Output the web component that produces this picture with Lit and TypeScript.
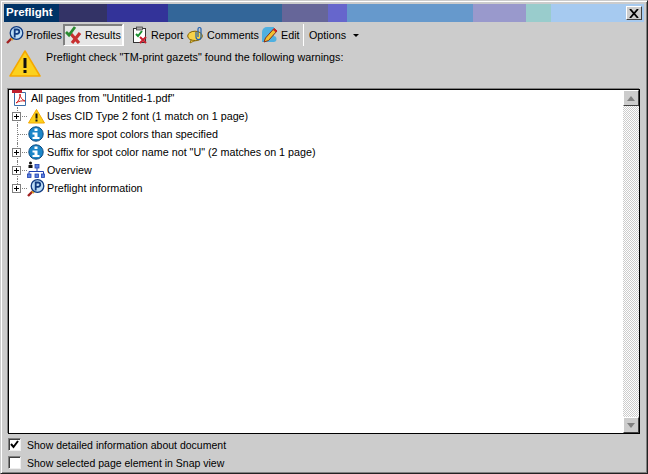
import { LitElement, html, css, svg } from "lit";
import { customElement } from "lit/decorators.js";

const segs: [number, string][] = [
  [55, "#003366"], [48, "#333366"], [61, "#333399"], [114, "#336699"], [46, "#666699"],
  [19, "#6666cc"], [126, "#6699cc"], [53, "#9999cc"], [25, "#99cccc"], [93, "#a6caf0"],
];

const pIcon = svg`<svg width="18" height="18" viewBox="0 0 18 18"><path d="M1 17l5-5" stroke="#a02020" stroke-width="2.400"/><path d="M5 12l2 2" stroke="#e0a020" stroke-width="2"/><circle cx="10.500" cy="7" r="6.300" fill="#bcdcf5" stroke="#103a80" stroke-width="1.300"/><path d="M8.700 11.500V3.500h2.400a2.100 2.100 0 0 1 0 4.300H8.700" fill="none" stroke="#103a80" stroke-width="1.800"/></svg>`;
const checkX = svg`<svg width="18" height="18" viewBox="0 0 18 18"><path d="M6 8l8 9M15 7l-8 10" stroke="#c83030" stroke-width="3.200"/><path d="M1 6l3 3 6-8" fill="none" stroke="#2a8a30" stroke-width="2.800"/></svg>`;
const report = svg`<svg width="18" height="18" viewBox="0 0 18 18"><rect x="2.500" y="2.500" width="12" height="14" fill="#fff" stroke="#333"/><rect x="5.500" y="1" width="6" height="3" fill="#aaa" stroke="#333" stroke-width=".7"/><path d="M5 8l2 2 4-5" fill="none" stroke="#1a9030" stroke-width="2"/><path d="M9 11l6 6M15 11l-6 6" stroke="#c82030" stroke-width="2"/></svg>`;
const comment = svg`<svg width="18" height="18" viewBox="0 0 18 18"><ellipse cx="8" cy="10" rx="7.300" ry="4.800" fill="#f7d34a" stroke="#806000"/><path d="M4 14l-1 3 5-2.500z" fill="#f7d34a" stroke="#806000" stroke-width=".8"/><path d="M11 11V3a1.500 1.500 0 0 1 3 0v8a2.500 2.500 0 0 1-5 0V6" fill="none" stroke="#2060b0" stroke-width="1.200"/></svg>`;
const edit = svg`<svg width="18" height="18" viewBox="0 0 18 18"><path d="M1 16V6a5 5 0 0 1 5-5h7v15z" fill="#4fb0e0"/><circle cx="12.500" cy="13" r="3" fill="#4fb0e0"/><path d="M3 16l1.500-4L13 2.500l3 2.500-8.500 9.500z" fill="#f0c030" stroke="#802010" stroke-width=".9"/><path d="M12.500 3l3 2.500" stroke="#d02020" stroke-width="2.200"/></svg>`;
const warnBig = svg`<svg width="32" height="28" viewBox="0 0 32 28"><path d="M16 1L31 26H1z" fill="#fbd11e" stroke="#f5a800" stroke-width="1.500" stroke-linejoin="round"/><path d="M16 8v10" stroke="#111" stroke-width="3"/><rect x="14.500" y="20" width="3" height="3" fill="#111"/></svg>`;
const warnSm = svg`<svg width="17" height="15" viewBox="0 0 17 15"><path d="M8.500 .5L16.500 14H.5z" fill="#fbd11e" stroke="#f5a800" stroke-linejoin="round"/><path d="M8.500 4.500v5" stroke="#111" stroke-width="2"/><rect x="7.500" y="10.500" width="2" height="2" fill="#111"/></svg>`;
const pdf = svg`<svg width="16" height="16" viewBox="0 0 16 16"><path d="M2.500 2.500h11v13h-11z" fill="#fff" stroke="#3a6ea8"/><rect x="0" y="0" width="10" height="3" fill="#c02030"/><path d="M4 13c3-2 4-5 4-9 0 3 2 6 5 7-3-.5-6 0-9 2z" fill="none" stroke="#d02020"/></svg>`;
const info = svg`<svg width="16" height="16" viewBox="0 0 16 16"><circle cx="8" cy="8" r="7.200" fill="#1c86c8" stroke="#0c4a80"/><rect x="6.500" y="2.500" width="3" height="2.500" fill="#fff"/><path d="M4.500 6.500h5V11h2v2h-7v-2h2V8.500h-2z" fill="#fff"/></svg>`;
const overview = svg`<svg width="18" height="18" viewBox="0 0 18 18"><circle cx="3.500" cy="2" r="1.500" fill="#111"/><rect x="1.500" y="4" width="4" height="3" fill="#111"/><path d="M10 7v3.500M2 13v-2.500h14.500V13" fill="none" stroke="#2040b0"/><g fill="#5a80e0" stroke="#2040b0" stroke-width=".8"><rect x="8" y="3.500" width="4" height="3.500"/><rect x=".5" y="13" width="3.500" height="3.500"/><rect x="8" y="13" width="3.500" height="3.500"/><rect x="14.500" y="13" width="3" height="3.500"/></g></svg>`;

interface Row { icon: unknown; text: string; exp: boolean; }
const rows: Row[] = [
  { icon: warnSm, text: "Uses CID Type 2 font (1 match on 1 page)", exp: true },
  { icon: info, text: "Has more spot colors than specified", exp: false },
  { icon: info, text: 'Suffix for spot color name not "U" (2 matches on 1 page)', exp: true },
  { icon: overview, text: "Overview", exp: true },
  { icon: pIcon, text: "Preflight information", exp: true },
];

@customElement("app-root")
export class AppRoot extends LitElement {
  static styles = css`
    :host { display: block; width: 648px; height: 474px; font: 10.75px "Liberation Sans", Arial, sans-serif; color: #000; }
    .win { box-sizing: border-box; width: 648px; height: 474px; background: #ccc; padding: 3px; border: 1px solid; border-color: #ccc #222 #222 #ccc; box-shadow: inset 1px 1px 0 #fff, inset -1px -1px 0 #808080; display: flex; flex-direction: column; }
    .title { height: 18px; display: flex; position: relative; flex: none; }
    .seg { height: 18px; }
    .name { position: absolute; left: 2px; top: 2px; color: #fff; font-weight: 700; font-size: 11.5px; }
    .close { position: absolute; right: 2px; top: 2px; box-sizing: border-box; width: 16px; height: 14px; background: #ccc; border: 1px solid; border-color: #fff #404040 #404040 #fff; display: flex; align-items: center; justify-content: center; }
    .bar { height: 24px; margin-top: 1px; display: flex; align-items: center; flex: none; }
    .tool { display: flex; align-items: center; gap: 2px; height: 22px; box-sizing: border-box; padding: 0 2px; white-space: nowrap; }
    .tool svg { display: block; flex: none; }
    .sel { background: #e6e6e6; border: 1px solid; border-color: #808080 #fff #fff #808080; padding: 0 1px; margin: 0 6px 0 1px; box-shadow: inset 1px 1px 0 #808080, 1px 0 0 #fff; width: 60px; }
    .report { width: 56px; }
    .comments { width: 74px; }
    .editt { width: 42px; }
    .profiles { width: 58px; }
    .sep { width: 1px; height: 22px; background: #fff; margin: 0 5px 0 2px; }
    .opt { width: 36px; white-space: nowrap; }
    .arrow { width: 0; height: 0; border: 3px solid transparent; border-top: 3px solid #000; border-bottom: 0; margin-left: 8px; }
    .msg { height: 40px; display: flex; gap: 5px; padding-left: 5px; flex: none; }
    .msg span { margin-top: 4px; }
    .msg svg { margin-top: 3px; flex: none; }
    .list { flex: 1; min-height: 0; background: #fff; border: 1px solid #000; margin: 2px 4px 0 4px; display: flex; box-shadow: -1px -1px 0 #808080; }
    .tree { flex: 1; margin-top: -1px; }
    .row { height: 18px; display: flex; align-items: center; white-space: nowrap; }
    .row svg { display: block; flex: none; }
    .icon { width: 18px; height: 18px; display: flex; align-items: center; justify-content: center; margin-right: 2px; flex: none; }
    .root { margin-left: 2px; }
    .lead { width: 16px; height: 18px; position: relative; flex: none; margin-left: 2px; }
    .vline { position: absolute; left: 6px; top: 0; bottom: 0; border-left: 1px dotted #808080; }
    .vline.last { bottom: 9px; }
    .hline { position: absolute; left: 6px; top: 9px; width: 10px; border-top: 1px dotted #808080; }
    .box { position: absolute; left: 1px; top: 5px; width: 9px; height: 9px; box-sizing: border-box; background: #fff; border: 1px solid #808080; }
    .box::before { content: ""; position: absolute; left: 1px; top: 3px; width: 5px; height: 1px; background: #000; }
    .box::after { content: ""; position: absolute; left: 3px; top: 1px; width: 1px; height: 5px; background: #000; }
    .scroll { width: 16px; flex: none; display: flex; flex-direction: column; background: repeating-conic-gradient(#ccc 0 25%, #fff 0 50%) 0 0 / 2px 2px; }
    .sb { box-sizing: border-box; width: 16px; height: 16px; flex: none; background: #ccc; border: 1px solid; border-color: #fff #404040 #404040 #fff; display: flex; align-items: center; justify-content: center; }
    .track { flex: 1; }
    .foot { height: 35px; flex: none; padding: 1px 0 0 4px; }
    .chk { display: flex; align-items: center; gap: 6px; height: 18px; font-size: 10.5px; }
    .chk span { padding-top: 2px; }
    .cb { box-sizing: border-box; width: 13px; height: 13px; background: #fff; border: 1px solid; border-color: #808080 #eee #eee #808080; box-shadow: inset 1px 1px 0 #404040; display: flex; align-items: center; justify-content: center; }
  `;

  renderRow(r: Row, i: number) {
    const last = i === rows.length - 1;
    return html`<div class="row">
      <div class="lead">
        <div class="vline ${last ? "last" : ""}"></div>
        <div class="hline"></div>
        ${r.exp ? html`<div class="box"></div>` : ""}
      </div>
      <div class="icon">${r.icon}</div><span>${r.text}</span>
    </div>`;
  }

  render() {
    const tools: [unknown, string, string][] = [
      [pIcon, "Profiles", "profiles"], [checkX, "Results", "sel"], [report, "Report", "report"], [comment, "Comments", "comments"], [edit, "Edit", "editt"],
    ];
    return html`<div class="win">
      <div class="title">
        ${segs.map(([w, c]) => html`<div class="seg" style="width:${w}px;background:${c}"></div>`)}
        <span class="name">Preflight</span>
        <div class="close"><svg width="10" height="9" viewBox="0 0 10 9"><path d="M1 0l8 9M9 0l-8 9" stroke="#000" stroke-width="1.800"/></svg></div>
      </div>
      <div class="bar">
        ${tools.map(([ic, t, c]) => html`<div class="tool ${c}">${ic}<span>${t}</span></div>`)}
        <div class="sep"></div>
        <span class="opt">Options</span><div class="arrow"></div>
      </div>
      <div class="msg">${warnBig}<span>Preflight check "TM-print gazets" found the following warnings:</span></div>
      <div class="list">
        <div class="tree">
          <div class="row"><div class="icon root">${pdf}</div><span>All pages from "Untitled-1.pdf"</span></div>
          ${rows.map((r, i) => this.renderRow(r, i))}
        </div>
        <div class="scroll">
          <div class="sb"><svg width="8" height="5" viewBox="0 0 8 5"><path d="M4 0L8 5H0z" fill="#808080"/></svg></div>
          <div class="track"></div>
          <div class="sb"><svg width="8" height="5" viewBox="0 0 8 5"><path d="M0 0H8L4 5z" fill="#808080"/></svg></div>
        </div>
      </div>
      <div class="foot">
        <div class="chk"><div class="cb"><svg width="9" height="9" viewBox="0 0 9 9"><path d="M1 4l2.500 3L8 1" fill="none" stroke="#000" stroke-width="2"/></svg></div><span>Show detailed information about document</span></div>
        <div class="chk"><div class="cb"></div><span>Show selected page element in Snap view</span></div>
      </div>
    </div>`;
  }
}
